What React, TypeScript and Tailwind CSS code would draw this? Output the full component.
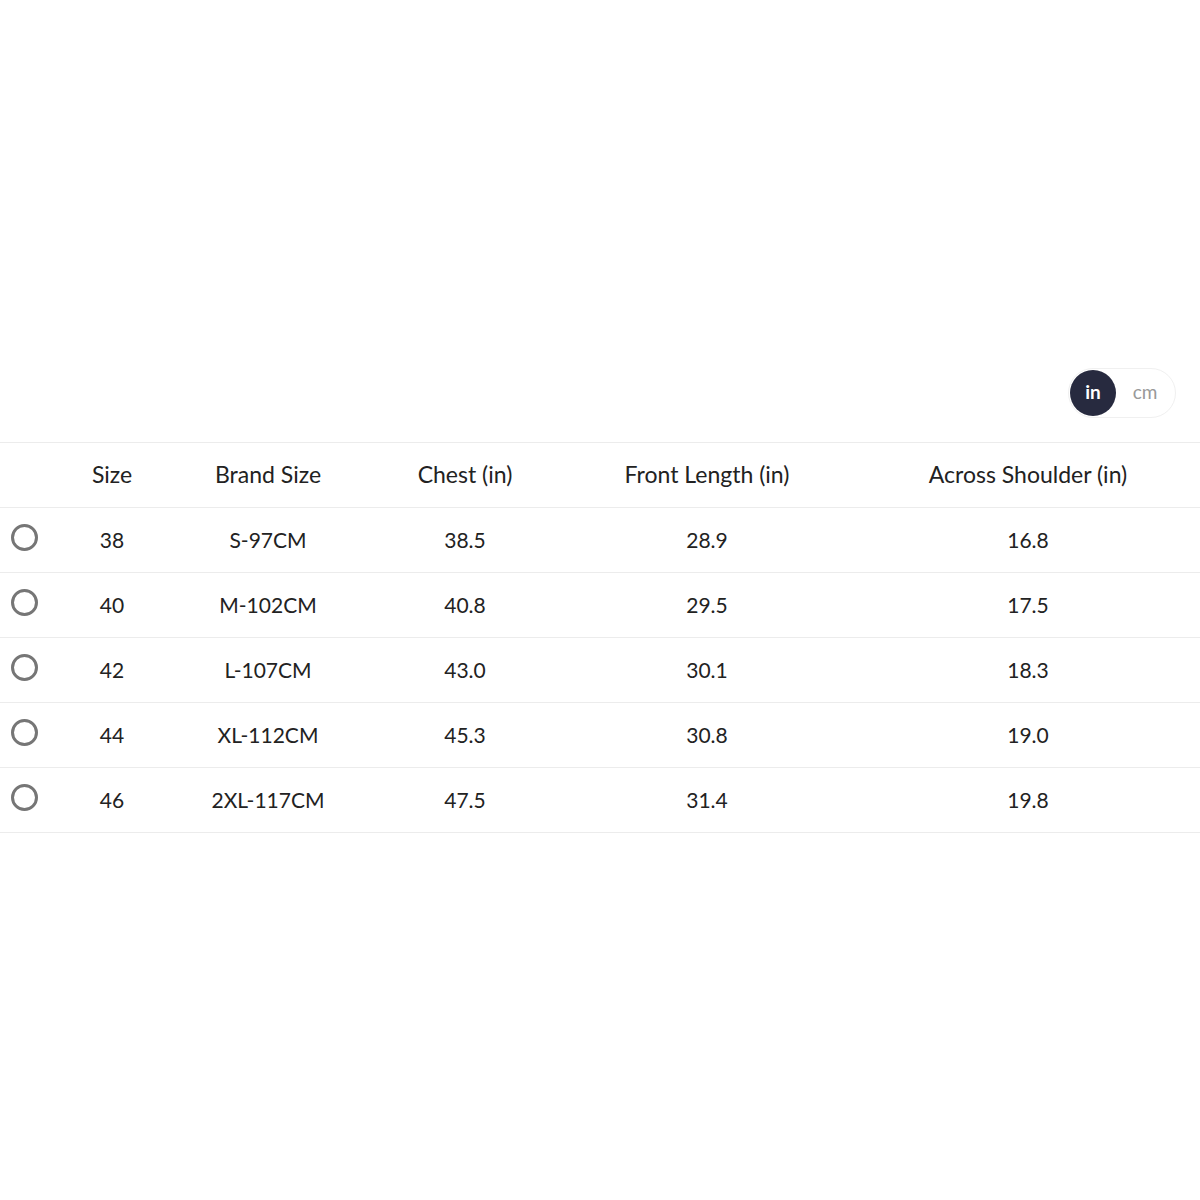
import { useState } from "react";

const rows = [
	{ size: "38", brand: "S-97CM", chest: "38.5", front: "28.9", shoulder: "16.8" },
	{ size: "40", brand: "M-102CM", chest: "40.8", front: "29.5", shoulder: "17.5" },
	{ size: "42", brand: "L-107CM", chest: "43.0", front: "30.1", shoulder: "18.3" },
	{ size: "44", brand: "XL-112CM", chest: "45.3", front: "30.8", shoulder: "19.0" },
	{ size: "46", brand: "2XL-117CM", chest: "47.5", front: "31.4", shoulder: "19.8" },
];

const cols = "grid grid-cols-[50px_124px_188px_206px_278px_1fr] items-center";

export default function App() {
	const [unit, setUnit] = useState<"in" | "cm">("in");
	const [selected, setSelected] = useState<number | null>(null);

	return (
		<div className="flex min-h-screen flex-col justify-center bg-white font-['Lato',sans-serif] text-[#222]">
			<div className="flex justify-end pr-6 pb-[24px]">
				<div className="flex h-[50px] items-center rounded-full border border-[#f0f0f0] bg-white p-[1px]">
					<button
						className={
							unit === "in"
								? "flex h-[46px] w-[46px] items-center justify-center rounded-full bg-[#272a3f] font-bold text-[19px] text-white"
								: "flex h-[46px] w-[46px] items-center justify-center rounded-full text-[19px] text-[#999]"
						}
						onClick={() => setUnit("in")}
						type="button"
					>
						in
					</button>
					<button
						className={
							unit === "cm"
								? "flex h-[46px] w-[58px] items-center justify-center rounded-full bg-[#272a3f] font-bold text-[19px] text-white"
								: "flex h-[46px] w-[58px] items-center justify-center rounded-full text-[19px] text-[#999]"
						}
						onClick={() => setUnit("cm")}
						type="button"
					>
						cm
					</button>
				</div>
			</div>

			<div className="border-[#ececec] border-t">
				<div className={`${cols} h-[65px] border-[#ececec] border-b text-center text-[23px]`}>
					<div />
					<div>Size</div>
					<div>Brand Size</div>
					<div>Chest (in)</div>
					<div>Front Length (in)</div>
					<div className="pl-[10px]">Across Shoulder (in)</div>
				</div>
				{rows.map((row, i) => (
					<div
						className={`${cols} h-[65px] cursor-pointer border-[#ececec] border-b text-center text-[21px]`}
						key={row.size}
						onClick={() => setSelected(i)}
					>
						<div className="flex justify-center pr-[1px] pb-[5px]">
							<span
								className={
									selected === i
										? "flex h-[27px] w-[27px] items-center justify-center rounded-full border-[3px] border-[#272a3f]"
										: "h-[27px] w-[27px] rounded-full border-[3px] border-[#767676]"
								}
							>
								{selected === i ? (
									<span className="h-[11px] w-[11px] rounded-full bg-[#272a3f]" />
								) : null}
							</span>
						</div>
						<div>{row.size}</div>
						<div>{row.brand}</div>
						<div>{row.chest}</div>
						<div>{row.front}</div>
						<div className="pl-[10px]">{row.shoulder}</div>
					</div>
				))}
			</div>
		</div>
	);
}
